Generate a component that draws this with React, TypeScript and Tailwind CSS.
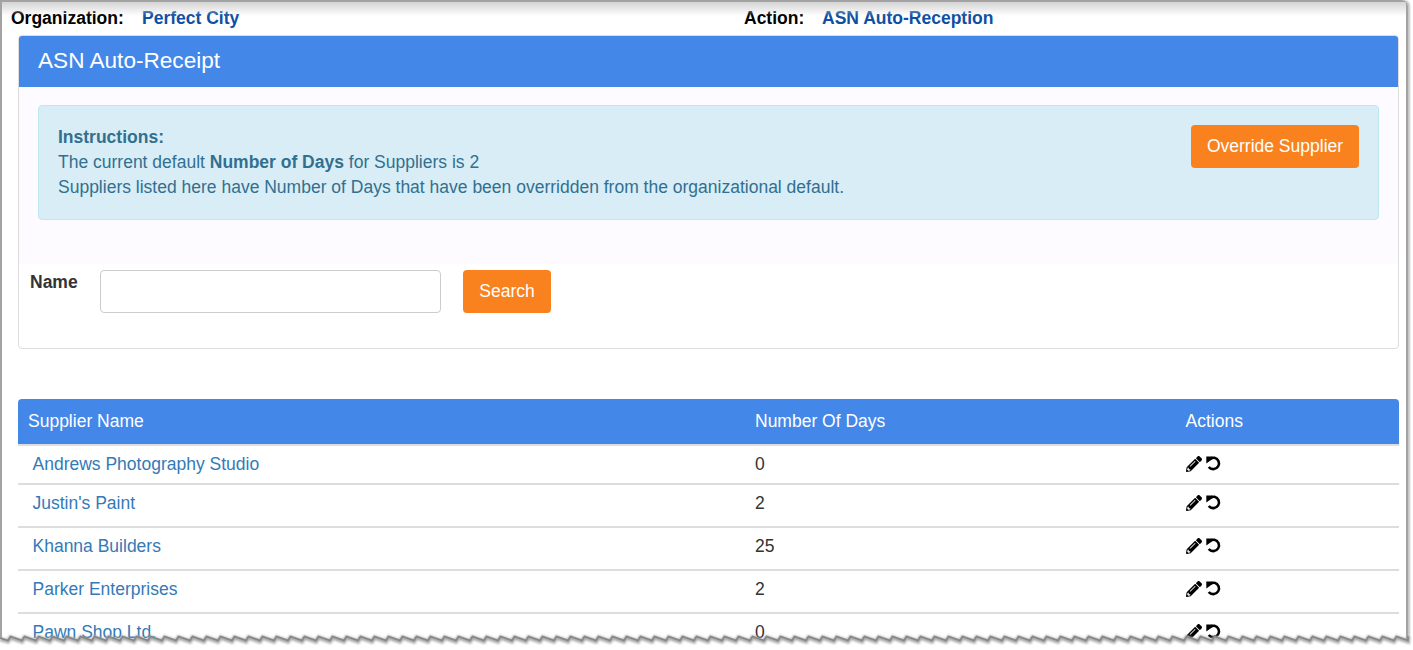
import React from 'react';
import { FaPencilAlt } from 'react-icons/fa';

const suppliers = [
  { name: 'Andrews Photography Studio', days: '0', rowClass: 'h-[39px]' },
  { name: "Justin's Paint", days: '2', rowClass: 'h-[43px] pb-[4px]' },
  { name: 'Khanna Builders', days: '25', rowClass: 'h-[43px] pb-[4px]' },
  { name: 'Parker Enterprises', days: '2', rowClass: 'h-[43px] pb-[4px]' },
  { name: 'Pawn Shop Ltd.', days: '0', rowClass: 'h-[43px] pb-[4px]' },
];

const UndoIcon = () => (
  <svg width="16" height="15" viewBox="0 0 16 15" className="block">
    <path d="M4 2.6 Q6 1.6 8.5 1.7 A5.8 5.8 0 1 1 2.7 11" fill="none" stroke="currentColor" strokeWidth="2.6" />
    <polygon points="0.3,0.6 6.6,0.6 6.6,3 0.3,7.4" fill="currentColor" />
  </svg>
);

// torn paper edge along the bottom of the screenshot
const tornEdge = () => {
  const pts: string[] = ['0,10', '8,12.5'];
  for (let x = 0; x <= 1400; x += 14) {
    pts.push(`${x + 10.5},8.5 ${x + 12},9 ${x + 22},12.5`);
  }
  return pts.filter((p) => parseFloat(p) <= 1407).join(' ');
};

const App = () => {
  const edge = tornEdge();
  return (
    <div className="relative w-[1413px] h-[650px] overflow-hidden bg-white text-[17.5px] text-[#333] font-['Liberation_Sans',Arial,sans-serif]">
      <div className="w-[1407px] h-[650px] pl-[18px] pr-[8px]">
        {/* Org / action line */}
        <div className="flex h-[35px] pt-[1px] items-center font-bold -ml-[7px]">
          <span className="w-[131px] text-black">Organization:</span>
          <span className="w-[602px] text-[#0f4fa3]">Perfect City</span>
          <span className="w-[78px] text-black">Action:</span>
          <span className="text-[#0f4fa3]">ASN Auto-Reception</span>
        </div>

        {/* Panel */}
        <div className="h-[314px] rounded border border-[#ddd] bg-white overflow-hidden">
          <div className="h-[51px] bg-[#4387e8] pl-[19px] pb-[2px] flex items-center text-[22.6px] text-white">ASN Auto-Receipt</div>
          <div className="h-[177px] bg-[#fdfbff] px-[19px] pt-[18px]">
            <div className="flex justify-between h-[115px] rounded border border-[#bce8f1] bg-[#d9edf7] pl-[19px] pr-[19px] pt-[19px] text-[#31708f]">
              <div className="leading-[25px]">
                <div className="font-bold">Instructions:</div>
                <div>The current default <b>Number of Days</b> for Suppliers is 2</div>
                <div>Suppliers listed here have Number of Days that have been overridden from the organizational default.</div>
              </div>
              <button className="w-[168px] h-[43px] rounded bg-[#f9821e] text-white text-center">Override Supplier</button>
            </div>
          </div>
          <div className="flex pl-[11px] pt-[6px]">
            <label className="w-[70px] font-bold leading-[24px]">Name</label>
            <input className="w-[341px] h-[43px] rounded border border-[#ccc] bg-white" />
            <button className="ml-[22px] w-[88px] h-[43px] rounded bg-[#f9821e] text-white">Search</button>
          </div>
        </div>

        {/* Supplier table */}
        <div className="mt-[50px]">
          <div className="flex h-[47px] items-center rounded-t bg-[#4387e8] border-b-2 border-[#ddd] text-white">
            <div className="w-[727px] pl-[10px]">Supplier Name</div>
            <div className="w-[430.5px] pl-[10px]">Number Of Days</div>
            <div className="pl-[10px]">Actions</div>
          </div>
          {suppliers.map((s) => (
            <div key={s.name} className={`flex items-center border-b-2 border-[#ddd] ${s.rowClass}`}>
              <div className="w-[727px] pl-[14.5px] text-[#337ab7]">{s.name}</div>
              <div className="w-[430.5px] pl-[10px]">{s.days}</div>
              <div className="flex items-center pl-[10px] gap-[4px] mb-[2px] text-black">
                <FaPencilAlt className="w-[16px] h-[16px]" />
                <UndoIcon />
              </div>
            </div>
          ))}
        </div>
      </div>

      {/* Screenshot frame drawn over the page */}
      <div className="absolute left-0 top-0 w-[1408px] h-[640px] rounded-tr-md border-l-2 border-r-2 border-t-2 border-[#a3a3a3] shadow-[2px_0_2px_#c4c4c4] pointer-events-none">
        <div className="h-[14px] bg-gradient-to-b from-[#d4d4d4] to-transparent" />
      </div>
      <svg className="absolute left-0 top-[628px]" width="1413" height="22" viewBox="0 0 1413 22">
        <polygon points={`0,10 ${edge} 1413,9 1413,22 0,22`} fill="#ffffff" />
        <polyline points={`${edge} 1408,8`} fill="none" stroke="#a8a8a8" strokeWidth="4" className="blur-[1px]" transform="translate(0 1)" />
        <polyline points={`${edge} 1408,8`} fill="none" stroke="#858585" strokeWidth="1.5" />
      </svg>
    </div>
  );
};

export default App;
